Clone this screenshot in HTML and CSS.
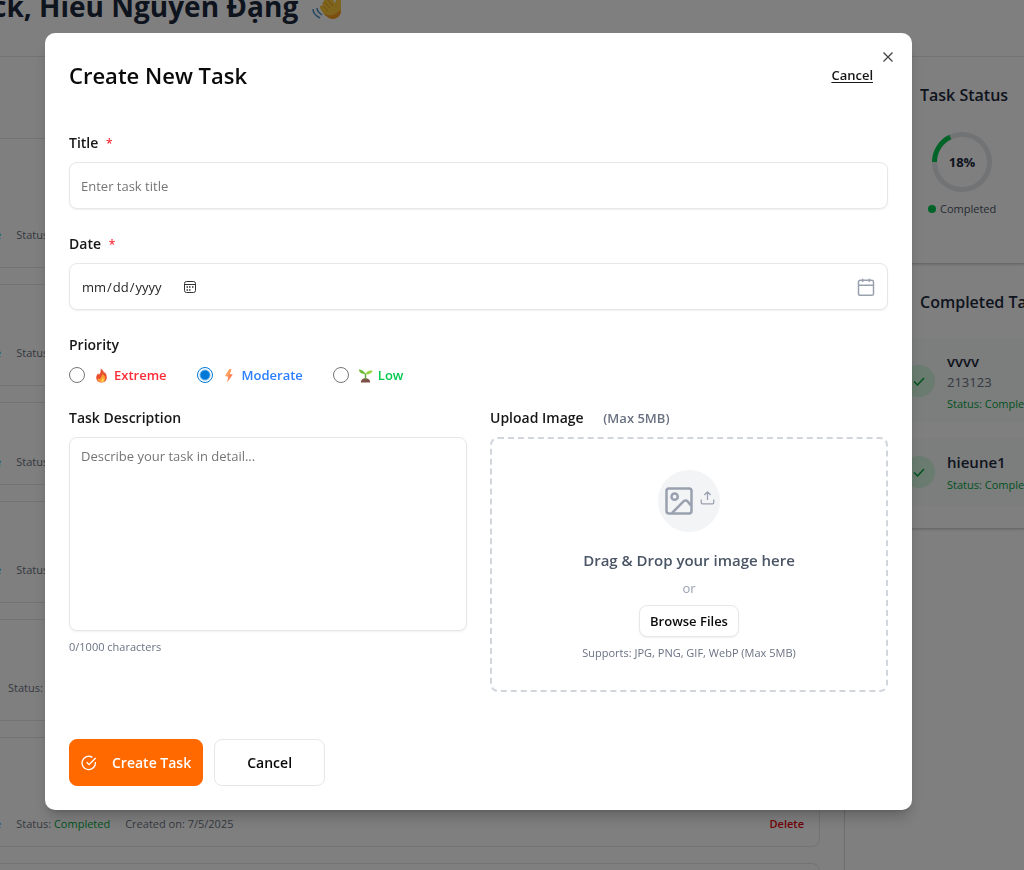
FILE: index.html
```html
<!DOCTYPE html>
<html lang="en">
<head>
<meta charset="utf-8">
<meta name="viewport" content="width=device-width, initial-scale=1">
<title>Create New Task</title>
<link rel="stylesheet" href="styles.css">
</head>
<body>
<div class="page">
  <header class="welcome">
    <h1>ck, Hiếu Nguyễn Đặng</h1>
    <svg class="wave" viewBox="0 0 30 30" aria-hidden="true">
      <path d="M17 27C13 24 10 21 8 17c-1-2 1-3 3-2-1-2-1-4 1-4-1-3 1-4 3-3 0-3 2-4 4-2l4 6c1-2 1-5 3-6 2 0 3 3 3 6v8c0 6-7 10-12 7z" fill="#ffc83d"/>
      <path d="M11 15l5 5M12 11l6 6M15 8l6 7" stroke="#e09a20" stroke-width="1" fill="none"/>
      <path d="M29 19c0 7-7 11-12 8-2-1-4-3-6-5 5 3 9 3 12 1s4-3 6-4z" fill="#f59a23"/>
      <path d="M5 17c0 3 2 5 5 7M1 18c0 4 3 7 7 9" stroke="#4a90c4" stroke-width="1.500" fill="none"/>
    </svg>
  </header>
  <div class="layout">
    <main class="tasks">
      <article class="card card-first"><p class="meta"><span class="blue">e</span><span>Status: Completed</span></p></article>
      <article class="card"><p class="meta"><span class="blue">e</span><span>Status: Completed</span></p></article>
      <article class="card card-short"><p class="meta"><span class="blue">e</span><span>Status: Completed</span></p></article>
      <article class="card"><p class="meta"><span class="blue">e</span><span>Status: Completed</span></p></article>
      <article class="card"><p class="meta meta-plain"><span>Status:</span></p></article>
      <article class="card card-tall">
        <p class="meta"><span class="blue">e</span><span>Status: <span class="green">Completed</span></span><span>Created on: 7/5/2025</span></p>
        <button class="delete" type="button">Delete</button>
      </article>
      <article class="card"></article>
    </main>
    <aside class="side">
      <section class="status">
        <h2>Task Status</h2>
        <div class="donut">
          <svg viewBox="0 0 60 60" aria-hidden="true">
            <circle cx="30" cy="30" r="27.500" fill="none" stroke="#e5e7eb" stroke-width="5"/>
            <circle cx="30" cy="30" r="27.500" fill="none" stroke="#00c950" stroke-width="5" pathLength="100" stroke-dasharray="18 82" transform="rotate(180 30 30)"/>
          </svg>
          <strong>18%</strong>
        </div>
        <p class="legend"><i class="dot"></i>Completed</p>
      </section>
      <section class="done">
        <h2>Completed Task</h2>
        <article class="done-item">
          <span class="check"><svg viewBox="0 0 16 16" aria-hidden="true"><path d="M3 8.500l3.500 3.500L13 5"/></svg></span>
          <div><h3>vvvv</h3><p class="note">213123</p><p class="state">Status: Completed</p></div>
        </article>
        <article class="done-item done-small">
          <span class="check"><svg viewBox="0 0 16 16" aria-hidden="true"><path d="M3 8.500l3.500 3.500L13 5"/></svg></span>
          <div><h3>hieune1</h3><p class="state">Status: Completed</p></div>
        </article>
      </section>
    </aside>
  </div>
</div>

<div class="overlay">
  <form class="modal" role="dialog" aria-labelledby="dialog-title">
    <button class="close" type="button" aria-label="Close"><svg viewBox="0 0 12 12" aria-hidden="true"><path d="M1.500 1.500l9 9M10.500 1.500l-9 9"/></svg></button>
    <div class="modal-head">
      <h2 id="dialog-title">Create New Task</h2>
      <a href="#">Cancel</a>
    </div>

    <div class="field">
      <label for="title">Title <span class="req">*</span></label>
      <input class="control" id="title" type="text" placeholder="Enter task title">
    </div>

    <div class="field">
      <label for="date">Date <span class="req">*</span></label>
      <div class="control date-box">
        <input id="date" type="date">
        <svg class="cal" viewBox="0 0 24 24" aria-hidden="true"><rect x="3" y="4" width="18" height="18" rx="2"/><path d="M8 2v4M16 2v4M3 10h18"/></svg>
      </div>
    </div>

    <fieldset class="field priority">
      <legend>Priority</legend>
      <div class="options">
        <label class="option red"><input type="radio" name="priority">
          <svg viewBox="0 0 16 16" aria-hidden="true"><path d="M7 .5c3 1.500 3 3.500 4 5 .3-.5.300-1 .3-1.500 2 2.500 2.700 5 2.200 7.500C13 14 11 15.500 8 15.500S3 14 2.500 11.500C2 9 3 7 4.500 5.500c.3.700.3 1.200.8 1.700C7 5.500 7.500 3 7 .5z" fill="#e8502f"/><path d="M9 6c1 1.500 2.500 2 3 4 .5 3-1.500 5-4 5s-4.500-1.500-4-4c.5.500 1 .8 1.700.7C7.500 10.500 8.500 9 9 6z" fill="#ff9f33"/><path d="M9 10c1 1 2 2 1.500 3.500S8 15 7 14.500C8.500 13.500 9 12 9 10z" fill="#ffd34d"/></svg>
          Extreme</label>
        <label class="option blue-label"><input type="radio" name="priority" checked>
          <svg viewBox="0 0 16 16" aria-hidden="true"><path d="M8 1L3.500 8.500l3.200.5L5.500 15.500 11.500 7 8.300 6.500 10 1z" fill="#ff8257"/><path d="M8 1L3.500 8.500l3.200.5 1.600-2.500L10 1z" fill="#ffa05a"/></svg>
          Moderate</label>
        <label class="option green-label"><input type="radio" name="priority">
          <svg viewBox="0 0 16 16" aria-hidden="true"><path d="M3 15.500c0-3 2.500-4.500 5-4.500s5 1.500 5 4.500z" fill="#7d5148"/><path d="M8 12V6" stroke="#5aa02c" stroke-width="1.500"/><path d="M8 6.500C7 3.500 4 1.500 1 1.500c0 3 3 5 7 5z" fill="#6fbf3a"/><path d="M8 6.500C9 3.500 12 2 15.500 3c-.5 3-4 4.500-7.500 3.500z" fill="#9bd64a"/></svg>
          Low</label>
      </div>
    </fieldset>

    <div class="columns">
      <div class="field">
        <label for="desc">Task Description</label>
        <textarea class="control" id="desc" placeholder="Describe your task in detail..."></textarea>
        <p class="counter">0/1000 characters</p>
      </div>
      <div class="field">
        <p class="upload-label">Upload Image <span>(Max 5MB)</span></p>
        <div class="drop">
          <div class="drop-icon">
            <svg class="pic" viewBox="0 0 24 24" aria-hidden="true"><rect x="2" y="2" width="20" height="20" rx="2"/><circle cx="8.500" cy="8.500" r="2.500"/><path d="M21.500 15.500l-2.700-3.300a2 2 0 0 0-3 0L6.500 21.500"/></svg>
            <svg class="up" viewBox="0 0 24 24" aria-hidden="true"><path d="M2 15v5a2 2 0 0 0 2 2h16a2 2 0 0 0 2-2v-5M17 8l-5-5-5 5M12 3v13"/></svg>
          </div>
          <p class="drop-title">Drag &amp; Drop your image here</p>
          <p class="or">or</p>
          <button class="browse" type="button">Browse Files</button>
          <p class="supports">Supports: JPG, PNG, GIF, WebP (Max 5MB)</p>
        </div>
      </div>
    </div>

    <div class="actions">
      <button class="btn primary" type="submit"><svg viewBox="0 0 24 24" aria-hidden="true"><path d="M21.500 10.500A10 10 0 1 1 17 3.500M8.500 11l3.500 3.500L22 4.500"/></svg>Create Task</button>
      <button class="btn" type="button">Cancel</button>
    </div>
  </form>
</div>
</body>
</html>
```

FILE: styles.css
```css
* { box-sizing: border-box; margin: 0; padding: 0; }
body { font-family: "Open Sans", "Noto Sans", sans-serif; font-size: 14px; color: #0a0a0a; background: #fff; }
button, input, textarea { font: inherit; color: inherit; }
button { cursor: pointer; }

/* Dashboard behind the dialog */
.page { height: 100vh; overflow: hidden; display: flex; flex-direction: column; }
.welcome { display: flex; align-items: center; gap: 14px; height: 70px; margin: -14px 0 0 -8px; padding-bottom: 30px; flex: none; }
.welcome h1 { font-size: 28px; line-height: 40px; font-weight: 700; color: #1d293d; white-space: nowrap; }
.wave { width: 30px; height: 30px; }
.layout { flex: 1; min-height: 0; display: grid; grid-template-columns: 1fr 179px; border-top: 1px solid #e5e7eb; }
.tasks { padding: 81px 24px 0 0; border-right: 1px solid #d8dade; display: flex; flex-direction: column; gap: 16px; }
.card { flex: none; height: 102px; padding: 0 15px 24px 0; border: 1px solid #e5e7eb; border-left: 0; border-radius: 0 8px 8px 0; display: flex; align-items: flex-end; justify-content: space-between; }
.card-first { height: 130px; }
.card-short { height: 83px; padding-bottom: 14px; }
.card-tall { height: 110px; padding-bottom: 14px; }
.meta { display: flex; gap: 15px; margin-left: -5px; font-size: 11px; line-height: 16px; color: #6a7282; white-space: nowrap; }
.meta-plain { margin-left: 8px; }
.blue { color: #00a6f4; }
.green { color: #00a63e; }
.delete { border: 0; background: none; font-size: 11px; line-height: 16px; font-weight: 600; color: #e7000b; }
.side { overflow: hidden; white-space: nowrap; }
.side h2 { font-size: 16px; line-height: 24px; font-weight: 600; color: #1d293d; }
.status { height: 207px; padding: 26px 0 0 75px; border-bottom: 1px solid #d1d5dc; box-shadow: 0 1px 2px rgba(0, 0, 0, .15); }
.donut { display: grid; place-items: center; width: 60px; margin: 25px 0 0 12px; }
.donut > * { grid-area: 1 / 1; }
.donut svg { width: 60px; height: 60px; }
.donut strong { font-size: 13px; color: #1d293d; }
.legend { display: flex; align-items: center; gap: 4px; margin: 9px 0 0 8px; font-size: 11px; line-height: 16px; color: #4a5565; }
.dot { width: 8px; height: 8px; border-radius: 50%; background: #00c950; }
.done { padding: 26px 0 23px 24px; border-bottom: 1px solid #d1d5dc; box-shadow: 0 1px 2px rgba(0, 0, 0, .15); }
.done h2 { padding-left: 51px; margin-bottom: 24px; }
.done-item { display: flex; align-items: center; gap: 12px; height: 85px; padding-left: 34px; background: #f9fafb; }
.done-item + .done-item { margin-top: 16px; }
.done-small { height: 66px; }
.check { display: grid; place-items: center; flex: none; width: 32px; height: 32px; border-radius: 50%; background: #d3f8df; }
.check svg { width: 16px; height: 16px; fill: none; stroke: #00a63e; stroke-width: 1.5; }
.done h3 { font-size: 15px; line-height: 22px; font-weight: 600; color: #1d293d; }
.note { font-size: 13px; line-height: 20px; color: #6a7282; }
.state { font-size: 11px; line-height: 16px; margin-top: 4px; color: #00a63e; }

/* Dialog */
.overlay { position: fixed; inset: 0; padding: 33px 112px 24px 45px; background: rgba(0, 0, 0, .5); overflow: auto; }
.modal { position: relative; padding: 24px; background: #fff; border-radius: 10px; box-shadow: 0 10px 15px -3px rgba(0, 0, 0, .2), 0 4px 6px -4px rgba(0, 0, 0, .2); }
.close { position: absolute; top: 18px; right: 18px; width: 12px; height: 12px; border: 0; background: none; display: grid; }
.close svg { width: 12px; height: 12px; fill: none; stroke: #444; stroke-width: 1.3; }
.modal-head { display: flex; align-items: center; justify-content: space-between; height: 36px; margin-bottom: 38px; padding-right: 15px; }
.modal-head h2 { font-size: 22px; line-height: 36px; font-weight: 600; }
.modal-head a { font-size: 13px; font-weight: 600; color: #171717; text-underline-offset: 2px; }
.field { display: flex; flex-direction: column; gap: 7px; min-width: 0; border: 0; }
.field + .field { margin-top: 23px; }
.columns .field + .field { margin-top: 0; }
.field > label, legend, .upload-label { font-size: 14px; line-height: 24px; font-weight: 600; color: #171717; }
.req { color: #fb2c36; margin-left: 4px; font-size: 12px; line-height: 12px; }
.control { width: 100%; height: 47px; padding: 0 11px; border: 1px solid #e5e7eb; border-radius: 8px; background: #fff; box-shadow: 0 1px 2px rgba(0, 0, 0, .06); font-size: 13px; outline: 0; }
.control::placeholder { color: #757575; opacity: 1; }
.date-box { display: flex; align-items: center; justify-content: space-between; }
.date-box input { width: 116px; border: 0; outline: 0; background: none; font-size: 13px; color: #262626; }
.date-box input::-webkit-calendar-picker-indicator {
  width: 14px;
  height: 14px;
  padding: 0;
  background: url("data:image/svg+xml,%3Csvg xmlns='http://www.w3.org/2000/svg' viewBox='0 0 14 14'%3E%3Crect x='1.500' y='1.500' width='11' height='11' rx='2' fill='none' stroke='%23333'/%3E%3Cpath d='M1.500 4.500h11' stroke='%23333'/%3E%3Cpath d='M6 7h1.500M9 7h1.500M3.500 10H5M6 10h1.500M3.500 7H5' stroke='%23333' stroke-width='1.300'/%3E%3C/svg%3E") center / 14px no-repeat;
}
.cal { width: 20px; height: 20px; fill: none; stroke: #99a1af; stroke-width: 1.8; }
.options { display: flex; gap: 30px; height: 22px; margin-top: 7px; }
.option { display: flex; align-items: center; font-size: 13px; line-height: 22px; font-weight: 600; }
.option svg { width: 15px; height: 15px; margin: 0 5px 0 9px; }
.option input { appearance: none; width: 16px; height: 16px; border: 1px solid #767676; border-radius: 50%; background: #fff; }
.option input:checked { border-color: #0078d7; background: radial-gradient(circle, #0078d7 4px, #fff 6px); }
.red { color: #fb2c36; }
.blue-label { color: #2b7fff; }
.green-label { color: #00c950; }
.columns { display: grid; grid-template-columns: 1fr 1fr; gap: 23px; margin-top: 20px; }
textarea.control { display: block; height: 194px; padding: 8px 11px; line-height: 20px; resize: none; }
.counter { font-size: 11px; line-height: 18px; color: #6a7282; }
.upload-label span { margin-left: 16px; font-size: 13px; line-height: 12px; color: #6a7282; }
.drop { display: flex; flex-direction: column; align-items: center; height: 255px; padding-top: 31px; border: 2px dashed #d1d5dc; border-radius: 8px; }
.drop-icon { display: flex; align-items: center; justify-content: center; gap: 6px; width: 62px; height: 62px; border-radius: 50%; background: #f3f4f6; }
.drop-icon svg { fill: none; stroke: #99a1af; stroke-width: 2; }
.pic { width: 30px; height: 30px; flex: none; }
.up { width: 15px; height: 15px; flex: none; margin-bottom: 8px; }
.drop-title { margin-top: 16px; font-size: 15px; line-height: 24px; font-weight: 600; color: #4a5565; }
.or { margin-top: 6px; font-size: 13px; line-height: 20px; color: #99a1af; }
.browse { margin: 7px 0; height: 32px; padding: 0 10px; border: 1px solid #e5e7eb; border-radius: 8px; background: #fff; box-shadow: 0 1px 2px rgba(0, 0, 0, .06); font-size: 13px; font-weight: 600; }
.supports { font-size: 11px; line-height: 18px; color: #6a7282; }
.actions { display: flex; gap: 11px; margin-top: 47px; }
.btn { display: flex; align-items: center; height: 47px; padding: 0 32px; border: 1px solid #e5e7eb; border-radius: 8px; background: #fff; font-size: 14px; font-weight: 600; }
.primary { gap: 15px; padding: 0 11px; border-color: #ff6900; background: #ff6900; color: #fff; }
.primary svg { width: 16px; height: 16px; fill: none; stroke: currentColor; stroke-width: 2; }
```
